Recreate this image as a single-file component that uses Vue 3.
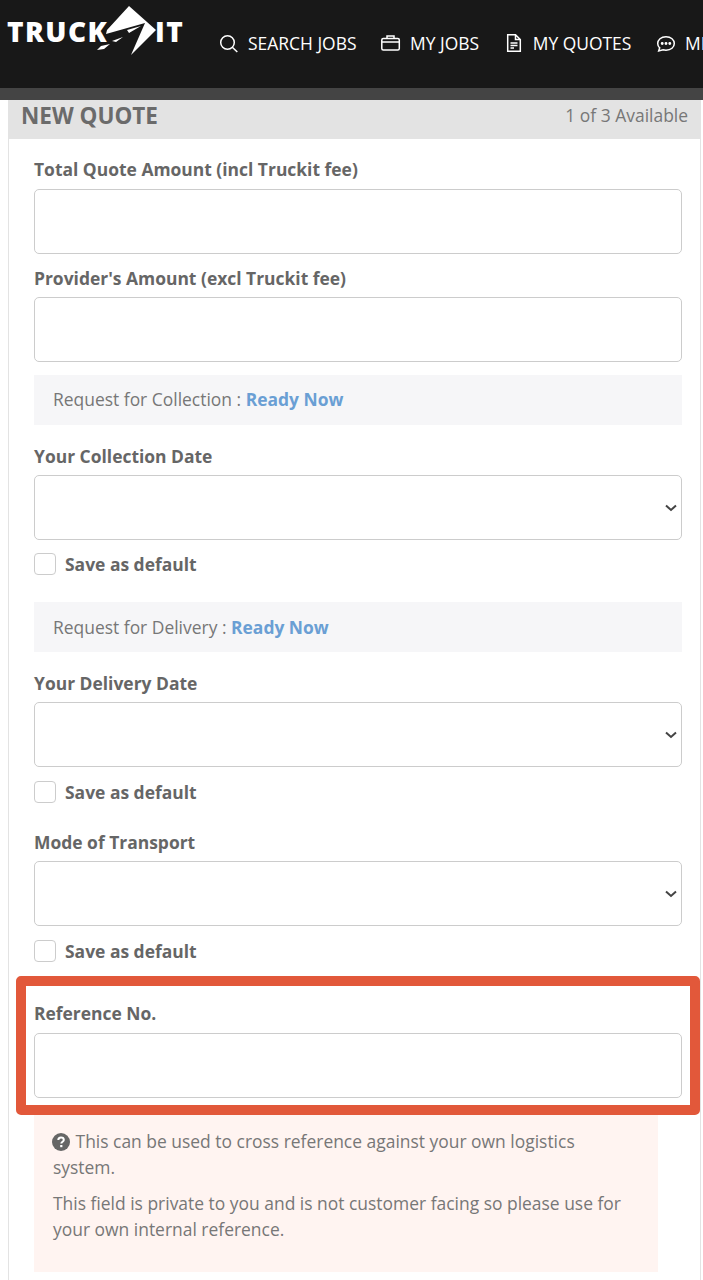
<template>
  <div class="page">
    <!-- Top nav -->
    <header class="topbar">
      <div class="logo">
        <span class="logo-word">TRUCK</span>
        <svg class="logo-mark" viewBox="0 0 62 56" width="62" height="56">
          <path fill="#fff" d="M34 6 L61 30 L36 55 L50 23 L11 34 L12 30 Z" />
          <path fill="#fff" d="M32 30 L46 26 L34 33 Z M17 41 L28 37 L21 42 Z M2 50 L6 46 L15 44 L9 49 Z" />
        </svg>
        <span class="logo-word">IT</span>
      </div>
      <nav class="nav">
        <a class="nav-item">
          <svg viewBox="0 0 20 20" width="20" height="20" fill="none" stroke="#fff" stroke-width="1.5">
            <circle cx="8.500" cy="9.500" r="6.800" />
            <path d="M13.300 14.300 L18.300 19" />
          </svg>
          SEARCH JOBS
        </a>
        <a class="nav-item">
          <svg viewBox="0 0 20 20" width="20" height="20" fill="none" stroke="#fff" stroke-width="1.5">
            <rect x="0.800" y="5.500" width="17.500" height="11.500" rx="1.500" />
            <path d="M0.800 9 H18.300 M6 5.500 V3 H13 V5.500" />
          </svg>
          MY JOBS
        </a>
        <a class="nav-item">
          <svg viewBox="0 0 20 20" width="20" height="20" fill="none" stroke="#fff" stroke-width="1.5">
            <path d="M3.700 1.700 H11.500 L16.300 6.500 V18.300 H3.700 Z M11.500 1.700 V6.500 H16.300" />
            <path d="M6.500 10 H13.500 M6.500 12.500 H13.500 M6.500 15 H10" />
          </svg>
          MY QUOTES
        </a>
        <a class="nav-item">
          <svg viewBox="0 0 20 20" width="20" height="20" fill="none" stroke="#fff" stroke-width="1.500">
            <path d="M10 3.800 C5 3.800 1.700 6.700 1.700 10.500 C1.700 12.400 2.500 13.800 3.700 14.800 L2.700 18 L7 16.800 C8 17.100 9 17.200 10 17.200 C15 17.200 18.300 14.300 18.300 10.500 C18.300 6.700 15 3.800 10 3.800 Z" />
            <circle cx="6.200" cy="10.500" r="0.700" fill="#fff" />
            <circle cx="10" cy="10.500" r="0.700" fill="#fff" />
            <circle cx="13.800" cy="10.500" r="0.700" fill="#fff" />
          </svg>
          MESSAGES
        </a>
      </nav>
    </header>
    <div class="subbar"></div>

    <!-- Quote form -->
    <section class="card">
      <div class="card-title">
        <h2>NEW QUOTE</h2>
        <span class="avail">1 of 3 Available</span>
      </div>
      <div class="card-body">
        <label class="lbl first">Total Quote Amount (incl Truckit fee)</label>
        <input class="ctl" type="text" />

        <label class="lbl second">Provider's Amount (excl Truckit fee)</label>
        <input class="ctl" type="text" />

        <template v-for="(d, i) in dateBlocks" :key="d.title">
          <div class="info" :class="{ lower: i === 1 }">{{ d.request }} : <strong>Ready Now</strong></div>
          <label class="lbl">{{ d.title }}</label>
          <div class="select-wrap">
            <select class="ctl"></select>
            <svg class="chev" viewBox="0 0 12 8" width="12" height="8" fill="none" stroke="#444" stroke-width="2">
              <path d="M1 1.500 L6 6 L11 1.500" />
            </svg>
          </div>
          <div class="check-row" :class="{ tight: i === 0 }">
            <input class="check" type="checkbox" />
            <span>Save as default</span>
          </div>
        </template>

        <label class="lbl mode">Mode of Transport</label>
        <div class="select-wrap">
          <select class="ctl"></select>
          <svg class="chev" viewBox="0 0 12 8" width="12" height="8" fill="none" stroke="#444" stroke-width="2">
            <path d="M1 1.500 L6 6 L11 1.500" />
          </svg>
        </div>
        <div class="check-row">
          <input class="check" type="checkbox" />
          <span>Save as default</span>
        </div>

        <div class="ref-field">
          <label class="lbl ref">Reference No.</label>
          <input class="ctl" type="text" />
          <div class="highlight"></div>
        </div>

        <div class="note">
          <p>
            <svg class="help" viewBox="0 0 18 18" width="18" height="18">
              <circle cx="9" cy="9" r="9" fill="#666" />
              <path d="M6.300 7 C6.300 5.300 7.500 4.500 9 4.500 C10.600 4.500 11.800 5.400 11.800 6.900 C11.800 8.700 9.300 8.800 9.300 10.600" fill="none" stroke="#fff" stroke-width="2" />
              <rect x="8.200" y="12" width="2.200" height="2.200" fill="#fff" />
            </svg>
            This can be used to cross reference against your own logistics system.
          </p>
          <p>This field is private to you and is not customer facing so please use for your own internal reference.</p>
        </div>
      </div>
    </section>
  </div>
</template>

<script setup>
const dateBlocks = [
  { request: 'Request for Collection', title: 'Your Collection Date' },
  { request: 'Request for Delivery', title: 'Your Delivery Date' }
]
</script>

<style>
html, body {
  margin: 0;
  background: #fff;
}
</style>

<style scoped>
.page {
  width: 703px;
  height: 1280px;
  overflow: hidden;
  font-family: "Open Sans", sans-serif;
  font-size: 17.45px;
  color: #666;
  background: #fff;
}

/* Top nav */
.topbar {
  height: 88px;
  background: #181818;
  display: flex;
  overflow: hidden;
  box-sizing: border-box;
}
.logo {
  flex: none;
  width: 219px;
  padding: 0 0 0 7px;
  box-sizing: border-box;
  display: flex;
  align-items: flex-start;
  color: #fff;
}
.logo-word {
  font-size: 28px;
  font-weight: 800;
  line-height: 28px;
  margin-top: 17px;
  letter-spacing: 1.4px;
}
.logo-mark {
  flex: none;
  margin: 0 -2px 0 -13px;
}
.nav {
  flex: none;
  display: flex;
  gap: 24.6px;
  padding-top: 33px;
  white-space: nowrap;
}
.nav-item {
  display: flex;
  align-items: flex-start;
  gap: 9px;
  color: #fff;
  line-height: 20px;
}
.nav-item svg {
  flex: none;
}
.subbar {
  height: 12px;
  background: #444;
}

/* Card */
.card {
  margin-left: 8px;
  width: 693px;
  box-sizing: border-box;
  border-left: 1px solid #e3e3e3;
  border-right: 1px solid #e3e3e3;
  height: 1180px;
}
.card-title {
  height: 39px;
  box-sizing: border-box;
  margin: 0 -1px;
  padding: 0 13px 8px;
  background: #e3e3e3;
  display: flex;
  justify-content: space-between;
  align-items: center;
}
.card-title h2 {
  margin: 0;
  font-size: 22.5px;
  font-weight: 700;
  color: #6b6b6b;
}
.avail {
  margin-bottom: 2px;
  color: #777;
}
.card-body {
  padding: 18px 18px 0 25px;
}

.lbl {
  display: block;
  font-weight: 700;
  line-height: 24px;
  margin: 19px 0 7px;
}
.lbl.first { margin: 0 0 8px; }
.lbl.second { margin: 12px 0 7px; }
.lbl.mode { margin: 27px 0 7px; }
.lbl.ref { margin: 0 0 8px; }

.ctl {
  display: block;
  width: 100%;
  height: 65px;
  box-sizing: border-box;
  border: 1px solid #ccc;
  border-radius: 5px;
  background: #fff;
  appearance: none;
  outline: none;
  font: inherit;
}
.select-wrap {
  position: relative;
}
.chev {
  position: absolute;
  right: 5px;
  top: 29px;
}

.info {
  margin-top: 13px;
  height: 50px;
  padding-left: 19px;
  background: #f6f6f8;
  line-height: 48px;
  color: #777;
}
.info.lower {
  line-height: 50px;
}
.info strong {
  color: #6a9fd4;
  font-weight: 700;
}
.check-row + .info {
  margin-top: 27px;
}

.check-row {
  margin-top: 14px;
  display: flex;
  align-items: center;
  gap: 9px;
  height: 22px;
  font-weight: 700;
}
.check-row.tight {
  margin-top: 13px;
}
.check {
  appearance: none;
  flex: none;
  width: 22px;
  height: 22px;
  margin: 0;
  box-sizing: border-box;
  border: 1px solid #ccc;
  border-radius: 4px;
  background: #fff;
}

/* Reference No. + annotation */
.ref-field {
  position: relative;
  margin-top: 39px;
}
.highlight {
  position: absolute;
  left: -18px;
  right: -18px;
  top: -25px;
  bottom: -17px;
  border: 10px solid #e2583a;
  border-radius: 5px;
  pointer-events: none;
}

.note {
  margin-top: 17px;
  width: 624px;
  height: 157px;
  box-sizing: border-box;
  padding: 13px 18px 0 19px;
  background: #fff4f1;
  line-height: 26px;
  color: #777;
}
.note p {
  margin: 0 0 10px;
}
.help {
  vertical-align: -3px;
  margin: 0 1px 0 -1px;
}
</style>
